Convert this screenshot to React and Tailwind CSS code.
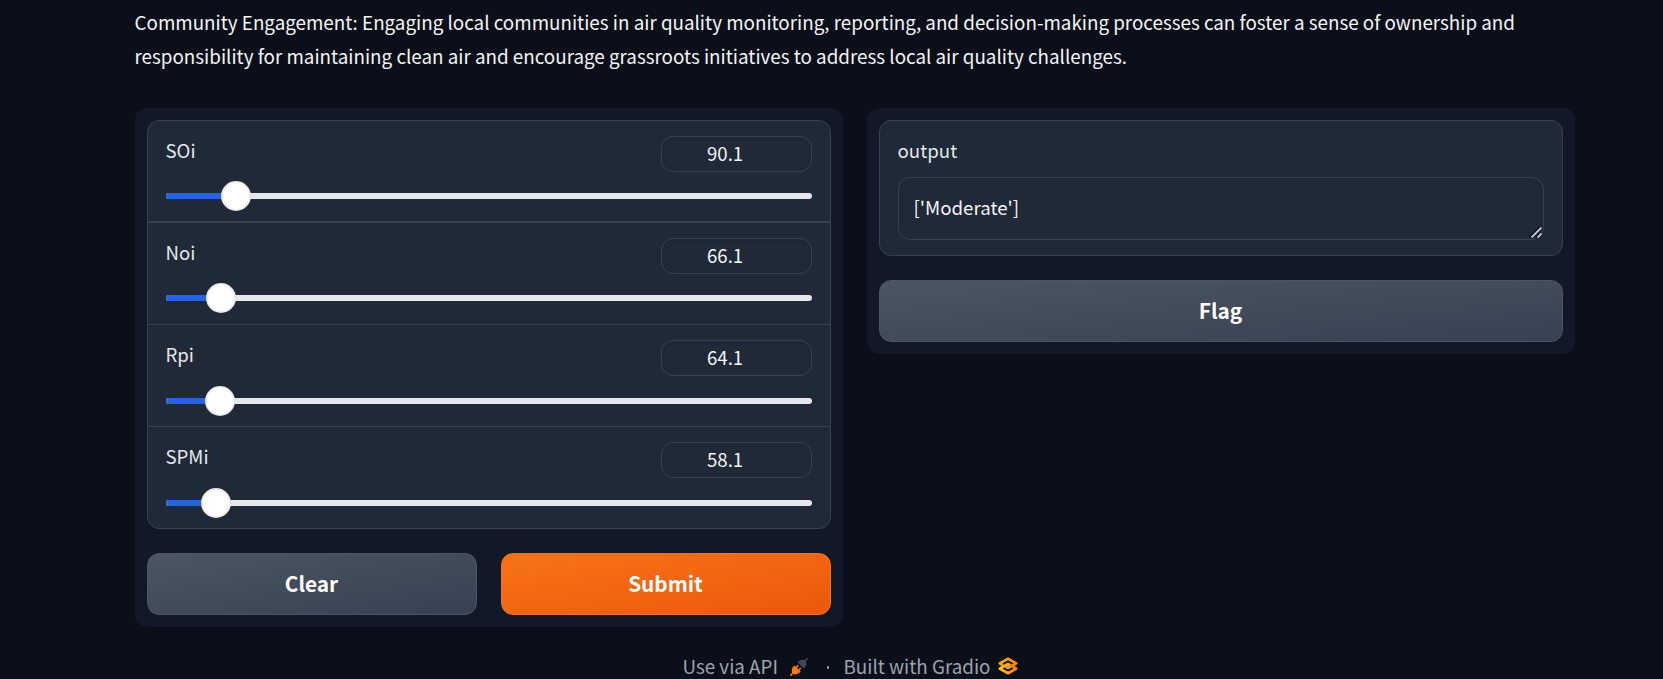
const sliders = [
  { label: 'SOi', value: '90.1', x: 55, row: 'h-[102px] border-b-2', gap: 'mt-[9px]' },
  { label: 'Noi', value: '66.1', x: 40, row: 'h-[102px] border-b', gap: 'mt-[9px]' },
  { label: 'Rpi', value: '64.1', x: 39, row: 'h-[102px] border-b', gap: 'mt-[10px]' },
  { label: 'SPMi', value: '58.1', x: 35, row: 'h-[101px]', gap: 'mt-[10px]' },
];

function SliderRow({ label, value, x, row, gap }) {
  return (
    <div className={'border-[#374151] px-[18px] pt-[15px] ' + row}>
      <div className="flex h-[36px] justify-between">
        <span className="-ml-[0.5px] text-[18.6px] leading-[28px] text-[#e5e7eb]">{label}</span>
        <div className="flex w-[151px] items-start rounded-xl border border-[#374151] pl-[45px] text-[18.6px] leading-[32px] text-[#f3f4f6] shadow-[inset_0_2px_4px_0_rgba(0,0,0,0.05)]">
          {value}
        </div>
      </div>
      <div className={'flex h-[30px] items-center ' + gap}>
        <div className="flex h-[6px] w-full items-center rounded-[3px] bg-[#e5e7eb]">
          <div className="-mr-[4px] h-[6px] rounded-[3px] bg-[#2563eb]" style={{ width: x + 4 }} />
          <div className="size-[30px] shrink-0 rounded-full bg-white shadow-[inset_0_0_3px_rgba(0,0,0,0.3)]" />
        </div>
      </div>
    </div>
  );
}

function Button({ primary, children }) {
  const tone = primary
    ? 'border-[#f97316] from-[#f97316] to-[#ea580c]'
    : 'border-[#4b5563] from-[#4b5563] to-[#374151]';
  return (
    <button className={'h-[62px] rounded-xl border bg-linear-to-br pr-px pb-px text-[20.8px] font-bold text-white ' + tone}>
      {children}
    </button>
  );
}

function PlugIcon() {
  return (
    <svg width="18" height="18" viewBox="0 0 18 18" fill="none">
      <path d="M15 3 L17.2 0.8" stroke="#3f4859" strokeWidth="1.6" strokeLinecap="round" />
      <path d="M7.6 4.2 C9.4 1.6 13.4 1 15.4 2.6 C17 4.6 16.4 8.4 13.8 10.4 Z" fill="#3f4859" />
      <path d="M3 15 L0.9 17.1" stroke="#ff7c00" strokeWidth="1.6" strokeLinecap="round" />
      <path d="M4.4 7.4 C1.6 9.6 1 13.2 2.6 15.4 C4.8 17 8.4 16.4 10.6 13.6 Z" fill="#ff7c00" />
      <path d="M6.2 9.4 L8.2 7.4 M8.8 12 L10.8 10" stroke="#ff7c00" strokeWidth="1.7" />
    </svg>
  );
}

function GradioLogo() {
  return (
    <svg width="20" height="18" viewBox="0 0 20 18" fill="none" strokeWidth="2.7" strokeLinejoin="round">
      <defs>
        <linearGradient id="upper" x1="1" y1="6" x2="19" y2="6" gradientUnits="userSpaceOnUse">
          <stop stopColor="#f9a814" />
          <stop offset="1" stopColor="#ff8a00" />
        </linearGradient>
        <linearGradient id="lower" x1="1" y1="12" x2="19" y2="12" gradientUnits="userSpaceOnUse">
          <stop stopColor="#ffd500" />
          <stop offset="1" stopColor="#ff7c00" />
        </linearGradient>
      </defs>
      <path d="M5 8.2 L1.8 6.4 L10 1.8 L18.2 6.4 L10 11 L7.6 9.7" stroke="url(#upper)" />
      <path d="M15 9.8 L18.2 11.6 L10 16.2 L1.8 11.6 L10 7 L12.4 8.3" stroke="url(#lower)" />
    </svg>
  );
}

export default function App() {
  return (
    <div className="h-[679px] overflow-hidden bg-[#0b0f19] px-[135px] pt-[5px] font-['Noto_Sans_CJK_SC',sans-serif]">
      <p className="-ml-[0.5px] whitespace-nowrap text-[18.81px] leading-[34px] text-[#f3f4f6]">
        Community Engagement: Engaging local communities in air quality monitoring, reporting, and decision-making processes can foster a sense of ownership and
        <br />
        responsibility for maintaining clean air and encourage grassroots initiatives to address local air quality challenges.
      </p>
      <div className="mt-[35px] flex w-[1440px] items-start gap-6">
        <div className="flex h-[519px] w-[708px] flex-col gap-6 rounded-xl bg-[#111827] p-3">
          <div className="flex h-[409px] flex-col rounded-xl border border-[#374151] bg-[#1f2937]">
            {sliders.map((s) => <SliderRow key={s.label} {...s} />)}
          </div>
          <div className="grid grid-cols-2 gap-6">
            <Button>Clear</Button>
            <Button primary>Submit</Button>
          </div>
        </div>
        <div className="flex w-[708px] flex-col gap-6 rounded-xl bg-[#111827] p-3">
          <div className="h-[136px] rounded-xl border border-[#374151] bg-[#1f2937] px-[18px] pt-[15px]">
            <div className="-ml-[0.5px] text-[18.7px] leading-[28px] text-[#e5e7eb]">output</div>
            <div className="relative mt-[13px]">
              <textarea
                readOnly
                value="['Moderate']"
                className="block h-[63px] w-full resize-none overflow-hidden rounded-xl border border-[#374151] px-[14.5px] py-[13px] text-[18.7px] leading-[32px] text-[#f3f4f6] shadow-[inset_0_2px_4px_0_rgba(0,0,0,0.05)]"
              />
              <svg className="absolute right-[2px] bottom-[2px]" width="12" height="12" viewBox="0 0 12 12" fill="none">
                <path d="M0 11 L11 0 M6 11 L11 6" stroke="#0b0f19" strokeWidth="1.6" />
                <path d="M1.5 11.5 L11.5 1.5 M7.5 11.5 L11.5 7.5" stroke="#c4c7cc" strokeWidth="1.8" />
              </svg>
            </div>
          </div>
          <Button>Flag</Button>
        </div>
      </div>
      <div className="mt-[25px] flex h-[28px] pl-[547.5px] text-[18.8px] leading-[28px] text-[#9ca3af]">
        <span className="w-[107.5px]">Use via API</span>
        <span className="w-[36.5px] pt-[6px]"><PlugIcon /></span>
        <span className="flex w-[17px] items-center"><span className="mt-[3px] size-[2.5px] rounded-full bg-[#9ca3af]" /></span>
        <span className="w-[154.5px]">Built with Gradio</span>
        <span className="pt-[5px]"><GradioLogo /></span>
      </div>
    </div>
  );
}
